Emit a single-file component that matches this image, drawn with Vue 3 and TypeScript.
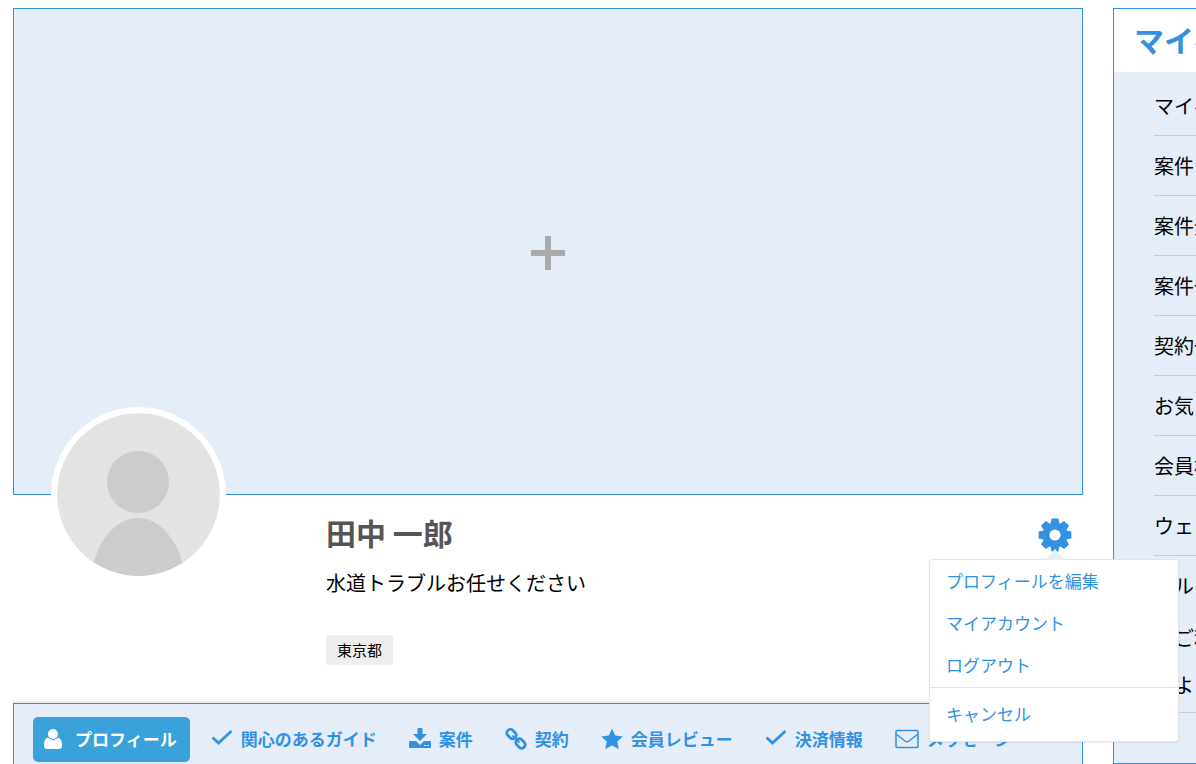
<script setup lang="ts">
import { ref } from 'vue'

interface Tab { icon: string; label: string }

const tabs: Tab[] = [
  { icon: 'user', label: 'プロフィール' },
  { icon: 'check', label: '関心のあるガイド' },
  { icon: 'download', label: '案件' },
  { icon: 'link', label: '契約' },
  { icon: 'star', label: '会員レビュー' },
  { icon: 'check', label: '決済情報' },
  { icon: 'mail', label: 'メッセージ' },
]
const active = ref('プロフィール')
const menuOpen = ref(true)
const account = ['プロフィールを編集', 'マイアカウント', 'ログアウト']
const links = ['マイページ', '案件 投稿', '案件登録', '案件一覧', '契約一覧', 'お気に入り', '会員検索', 'ウェブサイト']
const help = ['・ご利用ガイド', '・よくある質問']
</script>

<template>
  <div class="page">
    <main class="main">
      <button class="cover" type="button" aria-label="カバー写真を追加">
        <svg width="36" height="36" viewBox="0 0 36 36"><path d="M15 1h6v14h14v6H21v14h-6V21H1v-6h14z" fill="#aaa" /></svg>
      </button>
      <section class="profile">
        <div class="photo">
          <svg viewBox="0 0 163 163" role="img" aria-label="プロフィール写真">
            <rect width="163" height="163" fill="#e3e3e3" />
            <circle cx="81" cy="69" r="31" fill="#ccc" />
            <path d="M34 163C38 130 58 105 81 105s43 25 47 58z" fill="#ccc" />
          </svg>
        </div>
        <div class="about">
          <h1>田中 一郎</h1>
          <p>水道トラブルお任せください</p>
          <span class="tag">東京都</span>
        </div>
        <div class="settings">
          <button class="gear" type="button" aria-label="設定" @click="menuOpen = !menuOpen">
            <svg width="34" height="34" viewBox="0 0 34 34" fill="#3391e2">
              <path v-for="angle in [0, 45, 90, 135]" :key="angle" d="M13.6 0.6h6.8l1.4 7v18.8l-1.4 7h-6.8l-1.4-7V7.6z" :transform="`rotate(${angle} 17 17)`" />
              <circle cx="17" cy="17" r="12.6" />
              <circle cx="17" cy="17" r="5.6" fill="#fff" />
            </svg>
          </button>
          <div v-if="menuOpen" class="menu">
            <ul>
              <li v-for="item in account" :key="item"><a href="#">{{ item }}</a></li>
            </ul>
            <a class="cancel" href="#" @click.prevent="menuOpen = false">キャンセル</a>
          </div>
        </div>
      </section>
      <nav class="tabs">
        <a v-for="tab in tabs" :key="tab.label" href="#" :class="['tab', { active: active === tab.label }]" @click.prevent="active = tab.label">
          <svg v-if="tab.icon === 'user'" width="22" height="22" viewBox="0 0 22 22" fill="currentColor"><circle cx="10" cy="6" r="5" /><path d="M5 9.5c-3 .8-4 3.5-4 7.5 0 3 1 4 3 4h11c3 0 4-1 4-4 0-4-1-6.700-4-7.500-1 1.500-3 2.500-5 2.500S6 11 5 9.500z" /></svg>
          <svg v-else-if="tab.icon === 'check'" width="22" height="22" viewBox="0 0 22 22" fill="none" stroke="currentColor" stroke-width="2.8"><path d="M1.5 9.500l6 5.500L20.500 3" /></svg>
          <svg v-else-if="tab.icon === 'download'" width="22" height="22" viewBox="0 0 22 22" fill="currentColor"><path d="M9.500 0h3q1 0 1 1v5h4.500l-7 7-7-7h4.500V1q0-1 1-1z" /><path fill-rule="evenodd" d="M1 13h6l4 4 4-4h6q1 0 1 1v5q0 1-1 1H1q-1 0-1-1v-5q0-1 1-1zM15 17v1h2v-1zM18 17v1h2v-1z" /></svg>
          <svg v-else-if="tab.icon === 'link'" width="22" height="22" viewBox="0 0 22 22" fill="none" stroke="currentColor" stroke-width="2.8"><rect x="-5" y="-3.5" width="10" height="7" rx="3" transform="translate(6.5 6) rotate(45)" /><rect x="-5" y="-3.5" width="10" height="7" rx="3" transform="translate(15.5 15.5) rotate(45)" /><path d="M7.500 7.500l7 7" stroke-width="2" /></svg>
          <svg v-else-if="tab.icon === 'star'" width="22" height="22" viewBox="0 0 22 22" fill="currentColor"><path d="M11 .5l3.200 6.900 7.600 1-5.500 5.200 1.400 7.400L11 17.400 4.300 21l1.400-7.400L.2 8.400l7.600-1z" /></svg>
          <svg v-else width="24" height="22" viewBox="0 0 24 22" fill="none" stroke="currentColor" stroke-width="1.5"><rect x="1" y="2.5" width="22" height="17" rx="1" /><path d="M1 6l9 7q2 1.500 4 0l9-7" /></svg>
          <span>{{ tab.label }}</span>
        </a>
      </nav>
    </main>
    <aside class="side">
      <h2>マイページ</h2>
      <ul>
        <li v-for="link in links" :key="link"><a href="#">{{ link }}</a></li>
        <li class="help">
          <a href="#">ヘルプ</a>
          <a v-for="item in help" :key="item" class="sub" href="#">{{ item }}</a>
        </li>
      </ul>
    </aside>
  </div>
</template>

<style>
body { margin: 0; overflow-x: hidden; scrollbar-width: none; }
</style>

<style scoped>
* { box-sizing: border-box; }
.page {
  display: grid;
  grid-template-columns: calc(100% - 113px) 340px;
  gap: 30px;
  align-items: start;
  padding: 8px 0 0 13px;
  font-family: "Noto Sans CJK JP", sans-serif;
  color: #000;
}
a { color: #3391e2; text-decoration: none; }
ul { margin: 0; padding: 0; list-style: none; }
button { cursor: pointer; }
.cover {
  display: flex;
  align-items: center;
  justify-content: center;
  width: 100%;
  aspect-ratio: 1070 / 487;
  padding: 2px 0 0;
  border: 1px solid #3391e2;
  background: #e5eef8;
}
.profile { display: flex; min-height: 208px; border-bottom: 2px solid #eee; }
.photo {
  width: 175px;
  height: 175px;
  margin: -88px 0 0 38px;
  border: 6px solid #fff;
  border-radius: 50%;
  overflow: hidden;
  position: relative;
  background: #fff;
}
.photo svg { display: block; border-radius: 50%; }
.about { flex: 1; padding: 15px 0 0 100px; }
h1 { margin: 0; font-size: 30px; line-height: 44px; color: #555; }
p { margin: 13px 0 36px; font-size: 20px; line-height: 32px; }
.tag {
  display: inline-block;
  padding: 0 11px;
  border-radius: 3px;
  background: #eee;
  font-size: 15px;
  line-height: 30px;
}
.settings { position: relative; width: 34px; margin: 23px 11px 0 0; }
.gear { display: block; padding: 0; border: 0; background: none; }
.gear svg { display: block; }
.menu {
  position: absolute;
  top: 41px;
  right: -107px;
  z-index: 2;
  width: 250px;
  border: 1px solid #e5e5e5;
  border-radius: 3px;
  background: #fff;
  font-size: 17px;
  box-shadow: 0 1px 2px rgba(0, 0, 0, 0.08);
}
.menu::before {
  content: "";
  position: absolute;
  top: -11px;
  left: 115px;
  border: 10px solid transparent;
  border-top: 0;
  border-bottom: 11px solid #eee;
}
.menu ul { padding-bottom: 1px; border-bottom: 1px solid #e5e5e5; }
.menu a { display: block; padding: 0 16px; line-height: 42px; }
.menu .cancel { padding-bottom: 2px; line-height: 51px; }
.tabs {
  display: flex;
  gap: 10px;
  min-height: 80px;
  padding: 13px 19px;
  border: 1px solid #3391e2;
  background: #e5eef8;
}
.tab {
  display: flex;
  align-items: center;
  gap: 8px;
  height: 45px;
  padding: 0 11px 2px;
  font-size: 17px;
  font-weight: 700;
  white-space: nowrap;
}
.tab.active { padding-right: 13px; gap: 10px; padding-left: 10px; border-radius: 5px; background: #3ba1da; color: #fff; }
.tab svg { flex: none; }
.side { border: 1px solid #3391e2; background: #e5eef8; font-size: 20px; white-space: nowrap; }
.side h2 { margin: 0; padding: 0 20px 2px; background: #fff; color: #3391e2; font-size: 30px; line-height: 61px; }
.side ul { padding: 4px 40px 50px; }
.side li { border-bottom: 1px solid #ccc; }
.side a { display: block; line-height: 59px; color: #000; }
.side .help { padding: 2px 0 4px; }
.side .help a { line-height: 56px; }
.side .help .sub { line-height: 47px; }
</style>
